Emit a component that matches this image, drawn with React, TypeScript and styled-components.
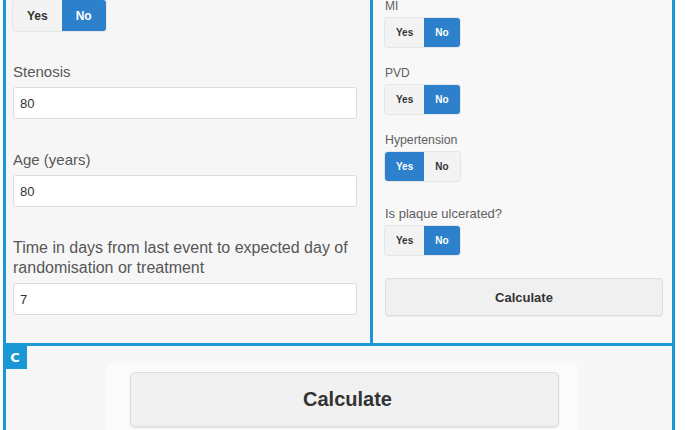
import React from "react";
import styled, { createGlobalStyle, css } from "styled-components";

const BLUE = "#1a98d5";
const ACTIVE = "#2d80cc";

const GlobalStyle = createGlobalStyle`
  html, body { margin: 0; padding: 0; background: #ffffff; }
  body { font-family: "Liberation Sans", Arial, Helvetica, sans-serif; }
  * { box-sizing: border-box; }
`;

const Figure = styled.div`
  width: 672px;
  margin-left: 3px;
  height: 430px;
  overflow: hidden;
`;

const TopRow = styled.div`
  display: grid;
  grid-template-columns: 367px 299px;
  height: 346px;
  border-left: 3px solid ${BLUE};
  border-right: 3px solid ${BLUE};
  border-bottom: 3px solid ${BLUE};
  overflow: hidden;
`;

const LeftPanel = styled.div`
  background: #f6f6f6;
  border-right: 3px solid ${BLUE};
  padding: 0 13px 0 7px;
  display: flex;
  flex-direction: column;
`;

const RightPanel = styled.div`
  background: #f8f8f8;
  padding: 0 9px 0 12px;
  display: flex;
  flex-direction: column;
  margin-top: -2px;
`;

const Field = styled.div<{ $gap?: number }>`
  display: flex;
  flex-direction: column;
  margin-top: ${(p) => p.$gap ?? 0}px;
`;

const BigLabel = styled.label<{ $size?: number }>`
  font-size: ${(p) => p.$size ?? 15}px;
  line-height: 20px;
  color: #575757;
  margin-bottom: 5px;
`;

const SmallLabel = styled.label<{ $size?: number }>`
  font-size: ${(p) => p.$size ?? 12}px;
  line-height: 16px;
  color: #5e5e5e;
  margin-bottom: 4px;
`;

const TextInput = styled.div`
  height: 32px;
  background: #ffffff;
  border: 1px solid #dcdcdc;
  border-radius: 3px;
  padding-left: 6px;
  display: flex;
  align-items: center;
  font-size: 13px;
  color: #333;
`;

const ToggleGroup = styled.div`
  display: inline-flex;
  align-self: flex-start;
  border-radius: 3px;
  overflow: hidden;
  box-shadow: 0 0 0 1px #e6e6e6;
`;

const ToggleButton = styled.span<{ $active?: boolean; $small?: boolean }>`
  display: flex;
  align-items: center;
  justify-content: center;
  font-weight: 700;
  ${(p) =>
    p.$small
      ? css`
          height: 29px;
          font-size: 10px;
          padding: 0 11px;
        `
      : css`
          height: 31px;
          font-size: 12px;
          padding: 0 14px;
        `}
  ${(p) =>
    p.$active
      ? css`
          background: ${ACTIVE};
          color: #ffffff;
        `
      : css`
          background: #f3f3f3;
          color: #333;
        `}
`;

const SmallCalc = styled.div`
  margin-top: 23px;
  height: 38px;
  background: #f0f0f0;
  border: 1px solid #dedede;
  border-radius: 4px;
  box-shadow: 0 1px 1px rgba(0, 0, 0, 0.06);
  display: flex;
  align-items: center;
  justify-content: center;
  font-size: 13px;
  font-weight: 700;
  color: #333;
`;

const BottomPanel = styled.div`
  position: relative;
  height: 84px;
  background: #f7f7f7;
  border-left: 3px solid ${BLUE};
  border-right: 3px solid ${BLUE};
  padding: 17px 0 0 101px;
`;

const Badge = styled.div`
  position: absolute;
  left: -3px;
  top: 0;
  width: 24px;
  height: 23px;
  background: ${BLUE};
  color: #fff;
  font-family: "DejaVu Sans", "Liberation Sans", sans-serif;
  font-weight: 700;
  font-size: 13px;
  display: flex;
  align-items: center;
  justify-content: center;
`;

const Stage = styled.div`
  width: 470px;
  height: 80px;
  background: #fbfbfb;
  padding: 9px 0 0 23px;
`;

const BigCalc = styled.div`
  width: 429px;
  height: 55px;
  background: #f1f1f1;
  border: 1px solid #dcdcdc;
  border-radius: 5px;
  box-shadow: 0 1px 2px rgba(0, 0, 0, 0.1);
  display: flex;
  align-items: center;
  justify-content: center;
  padding-left: 6px;
  font-size: 20px;
  font-weight: 700;
  color: #333;
`;

type ToggleProps = { value: "yes" | "no"; small?: boolean };

const Toggle = ({ value, small }: ToggleProps) => (
  <ToggleGroup>
    <ToggleButton $small={small} $active={value === "yes"}>
      Yes
    </ToggleButton>
    <ToggleButton $small={small} $active={value === "no"}>
      No
    </ToggleButton>
  </ToggleGroup>
);

const leftFields = [
  { label: "Stenosis", value: "80", size: 15 },
  { label: "Age (years)", value: "80", size: 15 },
  {
    label: "Time in days from last event to expected day of randomisation or treatment",
    value: "7",
    size: 16,
  },
];

const rightFields: { label: string; value: "yes" | "no"; gap: number; size: number }[] = [
  { label: "MI", value: "no", gap: 0, size: 12 },
  { label: "PVD", value: "no", gap: 18, size: 12 },
  { label: "Hypertension", value: "yes", gap: 18, size: 12.3 },
  { label: "Is plaque ulcerated?", value: "no", gap: 25, size: 13 },
];

export default function App() {
  return (
    <>
      <GlobalStyle />
      <Figure>
        <TopRow>
          <LeftPanel>
            <Toggle value="no" />
            {leftFields.map((f) => (
              <Field key={f.label} $gap={31}>
                <BigLabel $size={f.size}>{f.label}</BigLabel>
                <TextInput>{f.value}</TextInput>
              </Field>
            ))}
          </LeftPanel>
          <RightPanel>
            {rightFields.map((f) => (
              <Field key={f.label} $gap={f.gap}>
                <SmallLabel $size={f.size}>{f.label}</SmallLabel>
                <Toggle value={f.value} small />
              </Field>
            ))}
            <SmallCalc>Calculate</SmallCalc>
          </RightPanel>
        </TopRow>
        <BottomPanel>
          <Badge>C</Badge>
          <Stage>
            <BigCalc>Calculate</BigCalc>
          </Stage>
        </BottomPanel>
      </Figure>
    </>
  );
}
